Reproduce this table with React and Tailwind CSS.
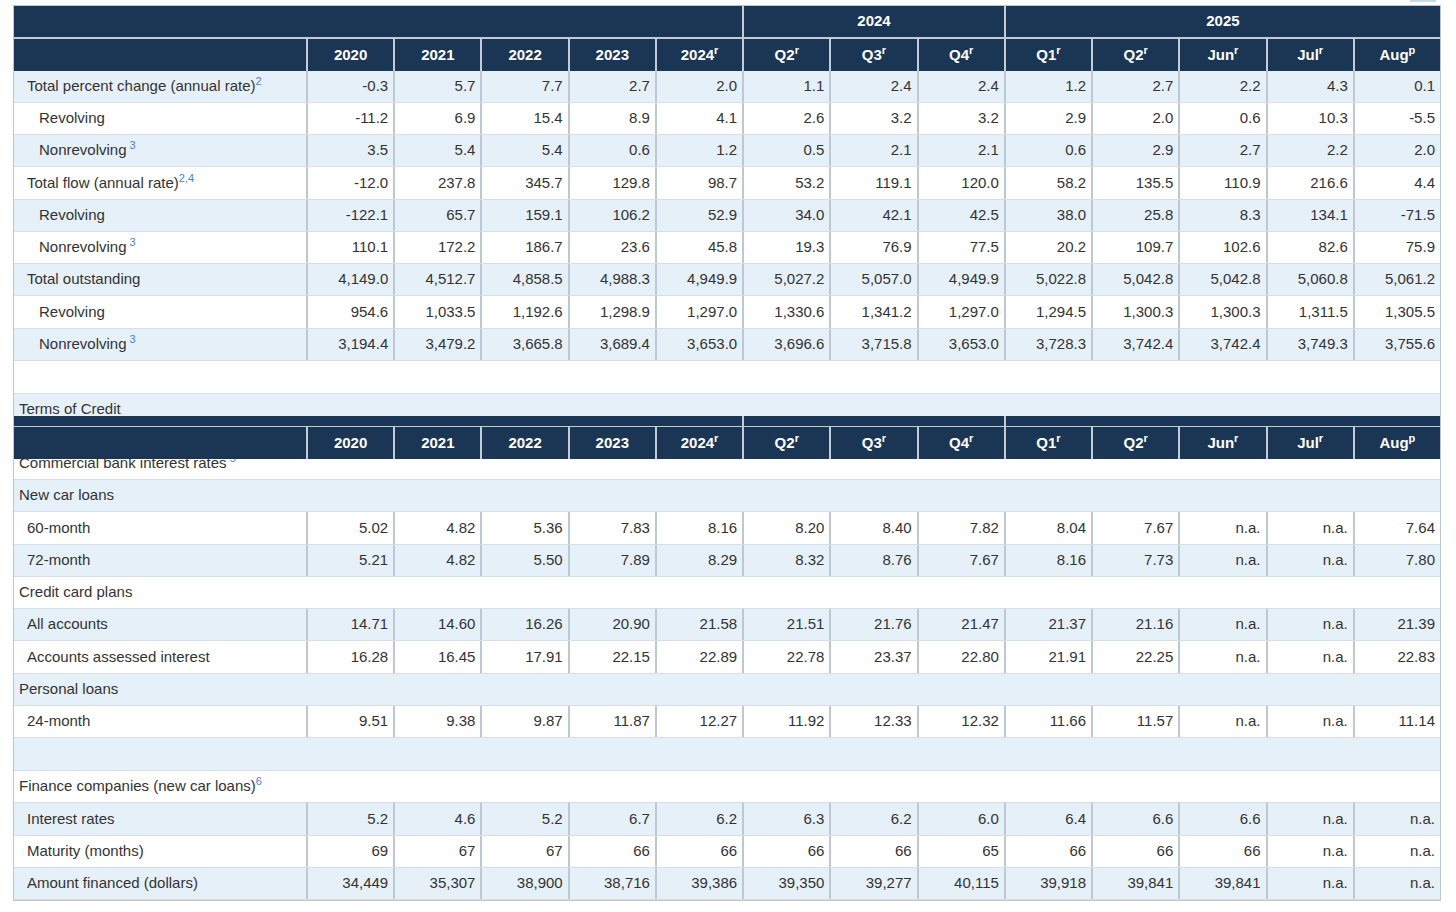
import React from "react";

const HEAD = [
  ["2020"], ["2021"], ["2022"], ["2023"], ["2024", "r"],
  ["Q2", "r"], ["Q3", "r"], ["Q4", "r"], ["Q1", "r"], ["Q2", "r"],
  ["Jun", "r"], ["Jul", "r"], ["Aug", "p"],
];

const GRID = "grid grid-cols-[292px_repeat(13,minmax(0,1fr))]";

function ColumnHeader({ h }) {
  return (
    <div className={`${GRID} bg-[#1a3654] ${h}`}>
      <div className="" />
      {HEAD.map(([t, s], i) => (
        <div
          key={i}
          className="flex items-center justify-center border-l-2 border-[#c3cbd4] text-[15px] font-bold text-white"
        >
          <span>
            {t}
            {s && <sup className="text-[11px] relative -top-[6px]">{s}</sup>}
          </span>
        </div>
      ))}
    </div>
  );
}

function GroupRow({ h, label = true }) {
  return (
    <div className={`${GRID} bg-[#1a3654] ${h}`}>
      <div className="col-span-6" />
      <div className="col-span-3 flex items-center justify-center border-l-2 border-[#c3cbd4] text-[15px] font-bold text-white">
        {label ? "2024" : ""}
      </div>
      <div className="col-span-5 flex items-center justify-center border-l-2 border-[#c3cbd4] text-[15px] font-bold text-white">
        {label ? "2025" : ""}
      </div>
    </div>
  );
}

function Sup({ children, space }) {
  return (
    <sup className="text-[11px] text-[#4a7fcb] relative -top-[6px]">
      {space ? "\u00a0" : ""}
      {children}
    </sup>
  );
}

function DataRow({ label, sup, supSpace, indent, values, blue }) {
  return (
    <div
      className={`${GRID} h-[32.25px] border-b border-[#d6dfe8] ${
        blue ? "bg-[#e6f0f9]" : "bg-white"
      }`}
    >
      <div className={`flex items-center ${indent}`}>
        <span>
          {label}
          {sup && <Sup space={supSpace}>{sup}</Sup>}
        </span>
      </div>
      {values.map((v, i) => (
        <div
          key={i}
          className="flex items-center justify-end border-l-2 border-[#bcc8d4] pr-[5px]"
        >
          {v}
        </div>
      ))}
    </div>
  );
}

function SectionRow({ label, sup, blue, h = "h-[32.25px]", children }) {
  return (
    <div
      className={`flex items-center pl-[5px] border-b border-[#d6dfe8] ${h} ${
        blue ? "bg-[#e6f0f9]" : "bg-white"
      }`}
    >
      {label && (
        <span>
          {label}
          {sup && <Sup space={sup === "5"}>{sup}</Sup>}
        </span>
      )}
      {children}
    </div>
  );
}

const top = [
  { label: "Total percent change (annual rate)", sup: "2", indent: "pl-[13px]", values: "-0.3 5.7 7.7 2.7 2.0 1.1 2.4 2.4 1.2 2.7 2.2 4.3 0.1" },
  { label: "Revolving", indent: "pl-[25px]", values: "-11.2 6.9 15.4 8.9 4.1 2.6 3.2 3.2 2.9 2.0 0.6 10.3 -5.5" },
  { label: "Nonrevolving", sup: "3", supSpace: true, indent: "pl-[25px]", values: "3.5 5.4 5.4 0.6 1.2 0.5 2.1 2.1 0.6 2.9 2.7 2.2 2.0" },
  { label: "Total flow (annual rate)", sup: "2,4", indent: "pl-[13px]", values: "-12.0 237.8 345.7 129.8 98.7 53.2 119.1 120.0 58.2 135.5 110.9 216.6 4.4" },
  { label: "Revolving", indent: "pl-[25px]", values: "-122.1 65.7 159.1 106.2 52.9 34.0 42.1 42.5 38.0 25.8 8.3 134.1 -71.5" },
  { label: "Nonrevolving", sup: "3", supSpace: true, indent: "pl-[25px]", values: "110.1 172.2 186.7 23.6 45.8 19.3 76.9 77.5 20.2 109.7 102.6 82.6 75.9" },
  { label: "Total outstanding", indent: "pl-[13px]", values: "4,149.0 4,512.7 4,858.5 4,988.3 4,949.9 5,027.2 5,057.0 4,949.9 5,022.8 5,042.8 5,042.8 5,060.8 5,061.2" },
  { label: "Revolving", indent: "pl-[25px]", values: "954.6 1,033.5 1,192.6 1,298.9 1,297.0 1,330.6 1,341.2 1,297.0 1,294.5 1,300.3 1,300.3 1,311.5 1,305.5" },
  { label: "Nonrevolving", sup: "3", supSpace: true, indent: "pl-[25px]", values: "3,194.4 3,479.2 3,665.8 3,689.4 3,653.0 3,696.6 3,715.8 3,653.0 3,728.3 3,742.4 3,742.4 3,749.3 3,755.6" },
];

const lower = [
  { section: "New car loans", blue: true },
  { label: "60-month", values: "5.02 4.82 5.36 7.83 8.16 8.20 8.40 7.82 8.04 7.67 n.a. n.a. 7.64" },
  { label: "72-month", values: "5.21 4.82 5.50 7.89 8.29 8.32 8.76 7.67 8.16 7.73 n.a. n.a. 7.80", blue: true },
  { section: "Credit card plans" },
  { label: "All accounts", values: "14.71 14.60 16.26 20.90 21.58 21.51 21.76 21.47 21.37 21.16 n.a. n.a. 21.39", blue: true },
  { label: "Accounts assessed interest", values: "16.28 16.45 17.91 22.15 22.89 22.78 23.37 22.80 21.91 22.25 n.a. n.a. 22.83" },
  { section: "Personal loans", blue: true },
  { label: "24-month", values: "9.51 9.38 9.87 11.87 12.27 11.92 12.33 12.32 11.66 11.57 n.a. n.a. 11.14" },
  { section: "", blue: true, h: "h-[33px]" },
  { section: "Finance companies (new car loans)", sup: "6" },
  { label: "Interest rates", values: "5.2 4.6 5.2 6.7 6.2 6.3 6.2 6.0 6.4 6.6 6.6 n.a. n.a.", blue: true },
  { label: "Maturity (months)", values: "69 67 67 66 66 66 66 65 66 66 66 n.a. n.a." },
  { label: "Amount financed (dollars)", values: "34,449 35,307 38,900 38,716 39,386 39,350 39,277 40,115 39,918 39,841 39,841 n.a. n.a.", blue: true },
];

export default function App() {
  return (
    <div className="min-h-[912px] w-[1456px] bg-white font-['Liberation_Sans',Arial,sans-serif] text-[15px] text-[#333333]">
      <div className="flex justify-end pr-[20px]">
        <div className="h-[2px] w-[26px] bg-[#c9d9ec]" />
      </div>
      <div className="relative ml-[13px] mt-[3px] w-[1428px] border border-[#bcc6d0]">
        <div className="border-b-2 border-[#c3cbd4]">
          <GroupRow h="h-[31px]" />
        </div>
        <ColumnHeader h="h-[31.5px]" />
        {top.map((r, i) => (
          <DataRow
            key={i}
            label={r.label}
            sup={r.sup}
            supSpace={r.supSpace}
            indent={r.indent}
            values={r.values.split(" ")}
            blue={i % 2 === 0}
          />
        ))}
        <SectionRow label="" h="h-[33px]" />
        <div className="flex flex-col items-start justify-start pl-[5px] pt-[6px] h-[54px] bg-[#e6f0f9] border-b border-[#d6dfe8]">
          <span className="leading-[18px]">Terms of Credit</span>
          <span className="leading-[18px] text-[#555] mt-[3px]">Widely used consumer credit terms</span>
        </div>
        <SectionRow label="Commercial bank interest rates" sup="5" />
        {lower.map((r, i) =>
          r.section !== undefined ? (
            <SectionRow key={i} label={r.section} sup={r.sup} blue={r.blue} h={r.h} />
          ) : (
            <DataRow
              key={i}
              label={r.label}
              indent="pl-[13px]"
              values={r.values.split(" ")}
              blue={r.blue}
            />
          )
        )}

        {/* sticky header overlay */}
        <div className="absolute left-0 right-0 top-[410px]">
          <div className="border-b-[1.5px] border-[#c3cbd4]">
            <GroupRow h="h-[10px]" label={false} />
          </div>
          <ColumnHeader h="h-[32px]" />
        </div>
      </div>
    </div>
  );
}
